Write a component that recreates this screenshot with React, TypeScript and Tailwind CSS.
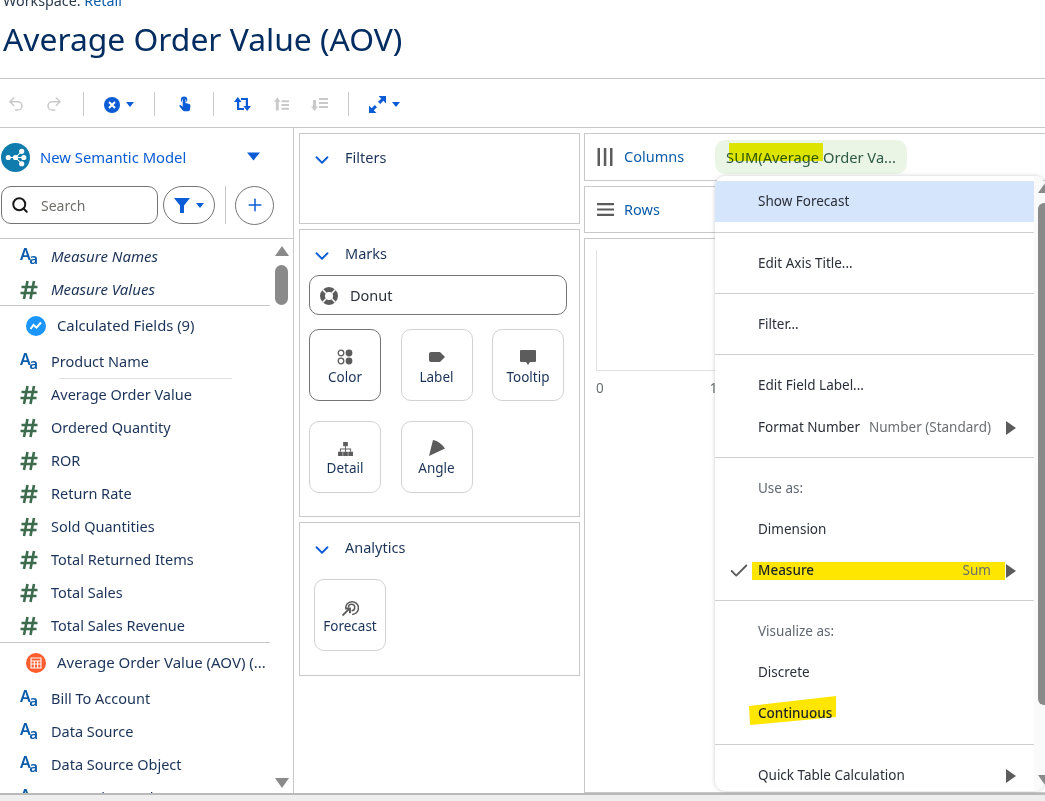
import * as React from 'react';
import { Search, Plus, Check, ChevronDown, Undo2, Redo2 } from 'lucide-react';

const Caret = ({ className = '' }: { className?: string }) => (
	<svg viewBox="0 0 10 6" className={className} fill="currentColor">
		<path d="M0 0h10L5 6z" />
	</svg>
);

const Hash = () => (
	<svg viewBox="0 0 18 20" className="w-[18px] h-[20px] text-[#3d6b4d]" stroke="currentColor" strokeWidth="2.600" fill="none">
		<path d="M7.500 1 4 19M14 1l-3.500 18M1.500 7h16M.5 13h16" />
	</svg>
);

const AaIcon = () => (
	<span className="relative block w-[18px] h-[18px] font-['Noto_Sans',sans-serif] font-semibold text-[#0b5cab] leading-none">
		<span className="absolute left-0 -top-[2px] text-[16px]">A</span>
		<span className="absolute right-0 top-[3px] text-[15px]">a</span>
	</span>
);

const Field = ({ type, name, italic }: { type: 'text' | 'num'; name: string; italic?: boolean }) => (
	<div className="h-[33px] flex items-center pl-5 text-[#1b3358] text-[14.500px]">
		{type === 'num' ? <Hash /> : <AaIcon />}
		<span className={italic ? 'ml-[13px] italic text-[15px]' : 'ml-[13px]'}>{name}</span>
	</div>
);

const Tile = ({
	label,
	icon,
	active,
	tight,
}: {
	label: string;
	icon: React.ReactNode;
	active?: boolean;
	tight?: boolean;
}) => (
	<div
		className={
			'w-[72px] h-[72px] rounded-[10px] border flex flex-col items-center justify-start pt-[17px] text-[13.500px] leading-[18px] text-[#1b3358] ' +
			(active ? 'border-[#747474]' : 'border-[#d2d2d2]')
		}>
		<div className="h-[20px] w-[20px] flex items-center justify-center text-[#5c5c5c]">{icon}</div>
		<span className={tight ? '' : 'mt-[1px]'}>{label}</span>
	</div>
);

const SectionHead = ({ title }: { title: string }) => (
	<div className="flex items-center text-[#1b3358] text-[14.500px] h-[24px]">
		<ChevronDown className="w-[22px] h-[22px] ml-[11px] mt-[3px] text-[#0b5cd5]" strokeWidth={2} />
		<span className="ml-[12px]">{title}</span>
	</div>
);

const MenuItem = ({
	label,
	hint,
	arrow,
	muted,
	active,
	strong,
}: {
	label: string;
	hint?: string;
	arrow?: boolean;
	muted?: boolean;
	active?: boolean;
	strong?: boolean;
}) => (
	<div className={'relative h-[41px] shrink-0 flex items-center pl-[43px] pr-[18px] text-[13.500px] ' + (active ? 'bg-[#d5e5fc]' : 'pt-[2px]')}>
		<span className={muted ? 'text-[#5f6770]' : strong ? 'text-[#1f2329] font-medium' : 'text-[#2a2f38]'}>{label}</span>
		{hint && <span className="ml-auto mr-[15px] text-[#6b6f72]">{hint}</span>}
		{arrow && (
			<svg viewBox="0 0 10 14" className={'w-[10px] h-[14px] text-[#5c5c5c] ' + (hint ? '' : 'ml-auto')} fill="currentColor">
				<path d="M0 0 10 7 0 14z" />
			</svg>
		)}
	</div>
);

const MenuSep = () => <div className="h-px shrink-0 mt-[10px] mb-[9px] bg-[#cfcfcf]" />;

export default function App() {
	return (
		<div className="relative w-[1045px] h-[801px] overflow-hidden bg-white flex flex-col font-['Noto_Sans',sans-serif]">
			<header className="h-[79px] shrink-0 border-b border-[#c9c9c9] pl-[3px] overflow-hidden">
				<div className="-mt-[9px] text-[14.300px] leading-[20px] text-[#2a3a4d]">
					Workspace: <span className="text-[#0b5cab]">Retail</span>
				</div>
				<h1 className="mt-[6px] text-[31.800px] leading-[44px] text-[#032d60]">Average Order Value (AOV)</h1>
			</header>

			<div className="h-[49px] shrink-0 border-b border-[#c9c9c9] flex items-center pt-[2px]">
				<Undo2 className="w-[18px] h-[18px] ml-[7px] text-[#c9c9c9]" />
				<Redo2 className="w-[18px] h-[18px] ml-[20px] text-[#c9c9c9]" />
				<div className="w-px h-[24px] bg-[#c9c9c9] ml-[20px]" />
				<svg viewBox="0 0 16 16" className="w-[16px] h-[16px] ml-[20px] mt-px text-[#0b5cd5]">
					<circle cx="8" cy="8" r="8" fill="currentColor" />
					<path d="m5 5 6 6M11 5l-6 6" stroke="#fff" strokeWidth="2" />
				</svg>
				<Caret className="w-[8px] h-[5px] ml-[6px] text-[#0b5cd5]" />
				<div className="w-px h-[24px] bg-[#c9c9c9] ml-[20px]" />
				<svg viewBox="1 2 13 16" className="w-[12px] h-[16px] ml-[24px] text-[#0b5cd5]" fill="currentColor">
					<path d="M5 5.500a1.500 1.500 0 0 1 3 0V9l4 1c1 .3 1.500 1 1.400 2l-.5 4c-.1 1-.9 1.800-2 1.800H6.500c-.7 0-1.300-.3-1.700-.9L1.500 12.500c-.5-.8.600-1.800 1.500-1.100L5 13z" />
					<path d="M3 5.500a3.500 3.500 0 0 1 7 0c0 .8-.2 1.400-.6 2H8.800a2.400 2.400 0 1 0-4.600 0H3.600a3.500 3.500 0 0 1-.6-2z" />
				</svg>
				<div className="w-px h-[24px] bg-[#c9c9c9] ml-[22px]" />
				<svg viewBox="0 0 17 14" className="w-[17px] h-[14px] ml-[20px] text-[#0b5cd5]" fill="currentColor">
					<path d="M3.800 0 7.600 5H5.200v6H10v2H3V5H0z" />
					<path d="M13.200 14 9.400 9h2.400V3H7V1h7v8h3z" />
				</svg>
				<svg viewBox="0 0 16 14" className="w-[15px] h-[14px] ml-[23px] text-[#c9c9c9]" fill="currentColor">
					<path d="M3.500 0 7 4.500H5V14H2V4.500H0zM8 3h8v2H8zM8 7h8v2H8zM8 11h8v2H8z" />
				</svg>
				<svg viewBox="0 0 17 14" className="w-[17px] h-[14px] ml-[22px] text-[#c9c9c9]" fill="currentColor">
					<path d="M3.500 14 0 9.500h2V3h3v6.500h2zM8 1h9v2H8zM8 5h9v2H8zM8 9h9v2H8z" />
				</svg>
				<div className="w-px h-[24px] bg-[#c9c9c9] ml-[20px]" />
				<svg viewBox="0 0 16 16" className="w-[17px] h-[17px] ml-[20px] text-[#0b5cd5]" fill="currentColor">
					<path d="M9 0h7v7l-2.500-2.500L10.500 7.500 8.500 5.500l3-3zM0 9l2.500 2.500 3-3 2 2-3 3L7 16H0z" />
				</svg>
				<Caret className="w-[8px] h-[5px] ml-[6px] text-[#0b5cd5]" />
			</div>

			<div className="flex-1 min-h-0 flex">
				{/* data pane */}
				<aside className="w-[294px] shrink-0 border-r border-[#c9c9c9] flex flex-col">
					<div className="h-[58px] shrink-0 flex items-center pl-[1px] pt-[1px]">
						<svg viewBox="0 0 28 28" className="w-[29px] h-[29px]">
							<circle cx="14" cy="14" r="14" fill="#107cad" />
							<g fill="#fff" stroke="#fff" strokeWidth="1">
								<circle cx="7" cy="14" r="2" />
								<circle cx="14" cy="14" r="2" />
								<circle cx="20" cy="8" r="2" />
								<circle cx="22" cy="14" r="2" />
								<circle cx="20" cy="20" r="2" />
								<path d="M7 14h15M14 14l6-6M14 14l6 6" fill="none" />
							</g>
						</svg>
						<span className="ml-[10px] text-[14.800px] text-[#0b5cd5]">New Semantic Model</span>
						<Caret className="w-[13px] h-[9px] ml-[61px] -mt-[2px] text-[#0b5cd5]" />
					</div>
					<div className="h-[38px] shrink-0 flex items-center pl-[1px]">
						<div className="w-[157px] h-[38px] rounded-[10px] border border-[#747474] flex items-center pl-[9px]">
							<Search className="w-[18px] h-[18px] text-[#181818]" strokeWidth={2.600} />
							<span className="ml-[12px] text-[14px] text-[#706e6b]">Search</span>
						</div>
						<div className="w-[52px] h-[38px] ml-[5px] rounded-full border border-[#747474] flex items-center pl-[10px]">
							<svg viewBox="0 0 16 16" className="w-[16px] h-[16px] text-[#0b5cd5]" fill="currentColor">
								<path d="M0 1h16L10 8.500V16H6V8.500z" />
							</svg>
							<Caret className="w-[8px] h-[5px] ml-[6px] text-[#0b5cd5]" />
						</div>
						<div className="w-px h-[38px] bg-[#c9c9c9] ml-[10px]" />
						<div className="w-[39px] h-[39px] ml-[9px] rounded-full border border-[#747474] flex items-center justify-center text-[#0b5cd5]">
							<Plus className="w-[20px] h-[20px]" strokeWidth={1.800} />
						</div>
					</div>
					<div className="mt-[14px] flex-1 min-h-0 border-t border-[#c9c9c9] flex overflow-hidden">
						<div className="w-[270px] shrink-0">
							<div className="pt-[1px]">
								<Field type="text" name="Measure Names" italic />
								<Field type="num" name="Measure Values" italic />
							</div>
							<div className="border-t border-[#c9c9c9] mt-[-1px]" />
							<div className="h-[39px] flex items-center pl-[26px] text-[14.800px] text-[#1b3358]">
								<svg viewBox="0 0 20 20" className="w-[20px] h-[20px]">
									<circle cx="10" cy="10" r="10" fill="#1b96ff" />
									<path d="m4.500 13 3-4 3 2.500 4.500-5" stroke="#fff" strokeWidth="2" fill="none" />
								</svg>
								<span className="ml-[11px]">Calculated Fields (9)</span>
							</div>
							<Field type="text" name="Product Name" />
							<div className="h-px bg-[#e2e2e2] ml-[59px] w-[173px] -mb-px" />
							<Field type="num" name="Average Order Value" />
							<Field type="num" name="Ordered Quantity" />
							<Field type="num" name="ROR" />
							<Field type="num" name="Return Rate" />
							<Field type="num" name="Sold Quantities" />
							<Field type="num" name="Total Returned Items" />
							<Field type="num" name="Total Sales" />
							<Field type="num" name="Total Sales Revenue" />
							<div className="border-t border-[#c9c9c9]" />
							<div className="h-[39px] flex items-center pl-[26px] text-[15px] text-[#1b3358] whitespace-nowrap">
								<svg viewBox="0 0 20 20" className="w-[20px] h-[20px]">
									<circle cx="10" cy="10" r="10" fill="#fe5c2c" />
									<path d="M5 5h10v10H5zM5 8h10M5 11h10M8.300 8v7M11.700 8v7" stroke="#fff" strokeWidth="1.100" fill="none" />
								</svg>
								<span className="ml-[11px]">Average Order Value (AOV) (...</span>
							</div>
							<Field type="text" name="Bill To Account" />
							<Field type="text" name="Data Source" />
							<Field type="text" name="Data Source Object" />
							<Field type="text" name="Internal Snapshot" />
						</div>
						<div className="relative w-[23px] shrink-0 flex flex-col items-start pl-[5px]">
							<svg viewBox="0 0 14 10" className="w-[14px] h-[10px] mt-[7px] text-[#8a8a8a]" fill="currentColor">
								<path d="M7 0 14 10H0z" />
							</svg>
							<div className="w-[13px] h-[40px] mt-[9px] rounded-full bg-[#8a8a8a]" />
							<svg viewBox="0 0 14 10" className="w-[14px] h-[10px] mt-auto mb-[5px] text-[#8a8a8a]" fill="currentColor">
								<path d="M0 0h14L7 10z" />
							</svg>
						</div>
					</div>
				</aside>

				{/* shelves */}
				<section className="w-[281px] shrink-0 ml-[5px] mt-[5px] flex flex-col gap-[5px]">
					<div className="h-[91px] border border-[#c9c9c9] pt-[12px]">
						<SectionHead title="Filters" />
					</div>
					<div className="h-[288px] border border-[#c9c9c9] pt-[12px]">
						<SectionHead title="Marks" />
						<div className="mx-[9px] mt-[9px] w-[258px] h-[40px] rounded-[10px] border border-[#747474] flex items-center pl-[10px] pt-px text-[14.500px] text-[#2a2f38]">
							<svg viewBox="0 0 18 18" className="w-[18px] h-[18px] text-[#5c5c5c]" fill="none" stroke="currentColor" strokeWidth="5">
								<circle cx="9" cy="9" r="6.500" />
								<path d="M9 0v5M9 13v5M13 9h5M0 9h5" stroke="#fff" strokeWidth="1.500" transform="rotate(45 9 9)" />
							</svg>
							<span className="ml-[12px]">Donut</span>
						</div>
						<div className="ml-[9px] mt-[14px] grid grid-cols-[72px_72px_72px] gap-x-[19.500px] gap-y-[20px]">
							<Tile
								label="Color"
								active
								icon={
									<svg viewBox="0 0 16 16" className="w-[16px] h-[16px]">
										<circle cx="4" cy="4" r="2.800" fill="none" stroke="currentColor" strokeWidth="1.300" />
										<circle cx="12" cy="4" r="3.400" fill="currentColor" />
										<circle cx="4" cy="12" r="2.800" fill="none" stroke="currentColor" strokeWidth="1.300" />
										<circle cx="12" cy="12" r="3.400" fill="currentColor" />
									</svg>
								}
							/>
							<Tile
								label="Label"
								icon={
									<svg viewBox="0 0 16 10" className="w-[16px] h-[10px]" fill="currentColor">
										<path d="M2 0h9l5 5-5 5H2a2 2 0 0 1-2-2V2a2 2 0 0 1 2-2z" />
									</svg>
								}
							/>
							<Tile
								label="Tooltip"
								icon={
									<svg viewBox="0 0 16 15" className="w-[16px] h-[15px]" fill="currentColor">
										<path d="M1 0h14a1 1 0 0 1 1 1v10a1 1 0 0 1-1 1h-5l-2 3-2-3H1a1 1 0 0 1-1-1V1a1 1 0 0 1 1-1z" />
									</svg>
								}
							/>
							<Tile
								label="Detail"
								tight
								icon={
									<svg viewBox="0 0 16 15" className="w-[15px] h-[14px]" fill="currentColor">
										<path d="M5.500 0h5v4.500h-5zM0 10.500h5V15H0zM5.500 10.500h5V15h-5zM11 10.500h5V15h-5z" />
										<path d="M7.500 4.500h1V7H14v3.500h-1V8H8.500v2.500h-1V8H3v2.500H2V7h5.500z" />
									</svg>
								}
							/>
							<Tile
								label="Angle"
								tight
								icon={
									<svg viewBox="0 0 16 16" className="w-[16px] h-[16px] -mt-[2px]" fill="currentColor">
										<path d="M4 0c5 1 9 4 12 8.500L0 16z" />
									</svg>
								}
							/>
						</div>
					</div>
					<div className="h-[154px] border border-[#c9c9c9] pt-[13px]">
						<SectionHead title="Analytics" />
						<div className="ml-[14px] mt-[19px]">
							<Tile
								label="Forecast"
								tight
								icon={
									<svg viewBox="0 0 16 16" className="w-[17px] h-[17px]" fill="none" stroke="currentColor" strokeWidth="1.400">
										<path d="M3.500 9A6 6 0 1 1 9.500 14.500M6 8a3 3 0 1 1 3 3" />
										<path d="M0.500 15.500 7 9M3 9h4.500v4.500" strokeWidth="1.800" />
									</svg>
								}
							/>
						</div>
					</div>
				</section>

				{/* viz area */}
				<section className="flex-1 min-w-0 ml-[4px] mt-[5px] flex flex-col gap-[5px]">
					<div className="h-[48px] shrink-0 border border-[#c9c9c9] border-r-0 flex items-center pl-[12px] text-[14.500px] text-[#0b5cab]">
						<svg viewBox="0 0 16 18" className="w-[16px] h-[18px] text-[#5c5c5c]" fill="currentColor">
							<path d="M.5 0H3v18H.5zM6.800 0h2.500v18H6.800zM13 0h2.500v18H13z" />
						</svg>
						<span className="ml-[11px]">Columns</span>
						<div className="relative ml-[31px] w-[192px] h-[34px] rounded-[10px] bg-[#eaf5e6] flex items-center pl-[11px] text-[14.700px] text-[#2e5a46] whitespace-nowrap">
							SUM(Average Order Va...
						</div>
					</div>
					<div className="h-[47px] shrink-0 border border-[#c9c9c9] border-r-0 flex items-center pl-[12px] text-[14.500px] text-[#0b5cab]">
						<svg viewBox="0 0 17 13" className="w-[17px] h-[13px] text-[#5c5c5c]" fill="currentColor">
							<path d="M0 0h17v2.200H0zM0 5.400h17v2.200H0zM0 10.800h17V13H0z" />
						</svg>
						<span className="ml-[10px]">Rows</span>
					</div>
					<div className="flex-1 min-h-0 border border-[#c9c9c9] border-r-0 pl-[11px] pt-[11px] text-[13.500px] text-[#6b6f72]">
						<div className="w-[130px] h-[121px] border-l border-b border-[#e2e2e2]" />
						<div className="mt-[7px] flex">
							<span>0</span>
							<span className="ml-[106px]">1</span>
						</div>
					</div>
				</section>
			</div>

			<div className="h-[8px] shrink-0 bg-[#eeeeee] border-t-2 border-[#b9b9b9]" />

			{/* field context menu */}
			<div className="absolute left-[715px] top-[176px] w-[330px] h-[615px] bg-white rounded-[10px] shadow-[0_0_4px_rgba(0,0,0,0.2)] overflow-hidden flex pt-[5px]">
				<div className="relative w-[319px] shrink-0 flex flex-col">
					<MenuItem label="Show Forecast" active />
					<MenuSep />
					<MenuItem label="Edit Axis Title..." />
					<MenuSep />
					<MenuItem label="Filter..." />
					<MenuSep />
					<MenuItem label="Edit Field Label..." />
					<div className="h-px shrink-0" />
					<MenuItem label="Format Number" hint="Number (Standard)" arrow />
					<MenuSep />
					<MenuItem label="Use as:" muted />
					<MenuItem label="Dimension" />
					<div className="relative">
						<div className="absolute left-[37px] top-[13px] w-[253px] h-[18px] bg-[#ffe600]" />
						<MenuItem label="Measure" hint="Sum" arrow strong />
						<Check className="absolute left-[13px] top-[11px] w-[22px] h-[22px] text-[#5c5c5c]" strokeWidth={2} />
					</div>
					<MenuSep />
					<MenuItem label="Visualize as:" muted />
					<MenuItem label="Discrete" />
					<div className="relative">
						<svg viewBox="0 0 87 29" className="absolute left-[34px] top-[4px] w-[87px] h-[29px] text-[#ffe600]" fill="currentColor">
							<path d="M0 10 87 0v21L1 29z" />
						</svg>
						<MenuItem label="Continuous" strong />
					</div>
					<div className="h-px shrink-0" />
					<MenuSep />
					<MenuItem label="Quick Table Calculation" arrow />
				</div>
				<div className="flex-1 flex flex-col pl-[4px] -mt-[5px] bg-[#fafafa]">
					<svg viewBox="0 0 14 10" className="w-[14px] h-[10px] mt-[7px] text-[#8a8a8a]" fill="currentColor">
						<path d="M7 0 14 10H0z" />
					</svg>
					<div className="w-[13px] h-[502px] mt-[10px] rounded-[6px] bg-[#8a8a8a]" />
				</div>
			</div>
			{/* marker over the pill */}
			<div className="absolute left-[729px] top-[143px] w-[94px] h-[18px] bg-[#f0ee00] mix-blend-multiply" />
			<svg viewBox="0 0 14 10" className="absolute left-[1038px] top-[775px] w-[14px] h-[10px] text-[#8a8a8a]" fill="currentColor">
				<path d="M0 0h14L7 10z" />
			</svg>
		</div>
	);
}
